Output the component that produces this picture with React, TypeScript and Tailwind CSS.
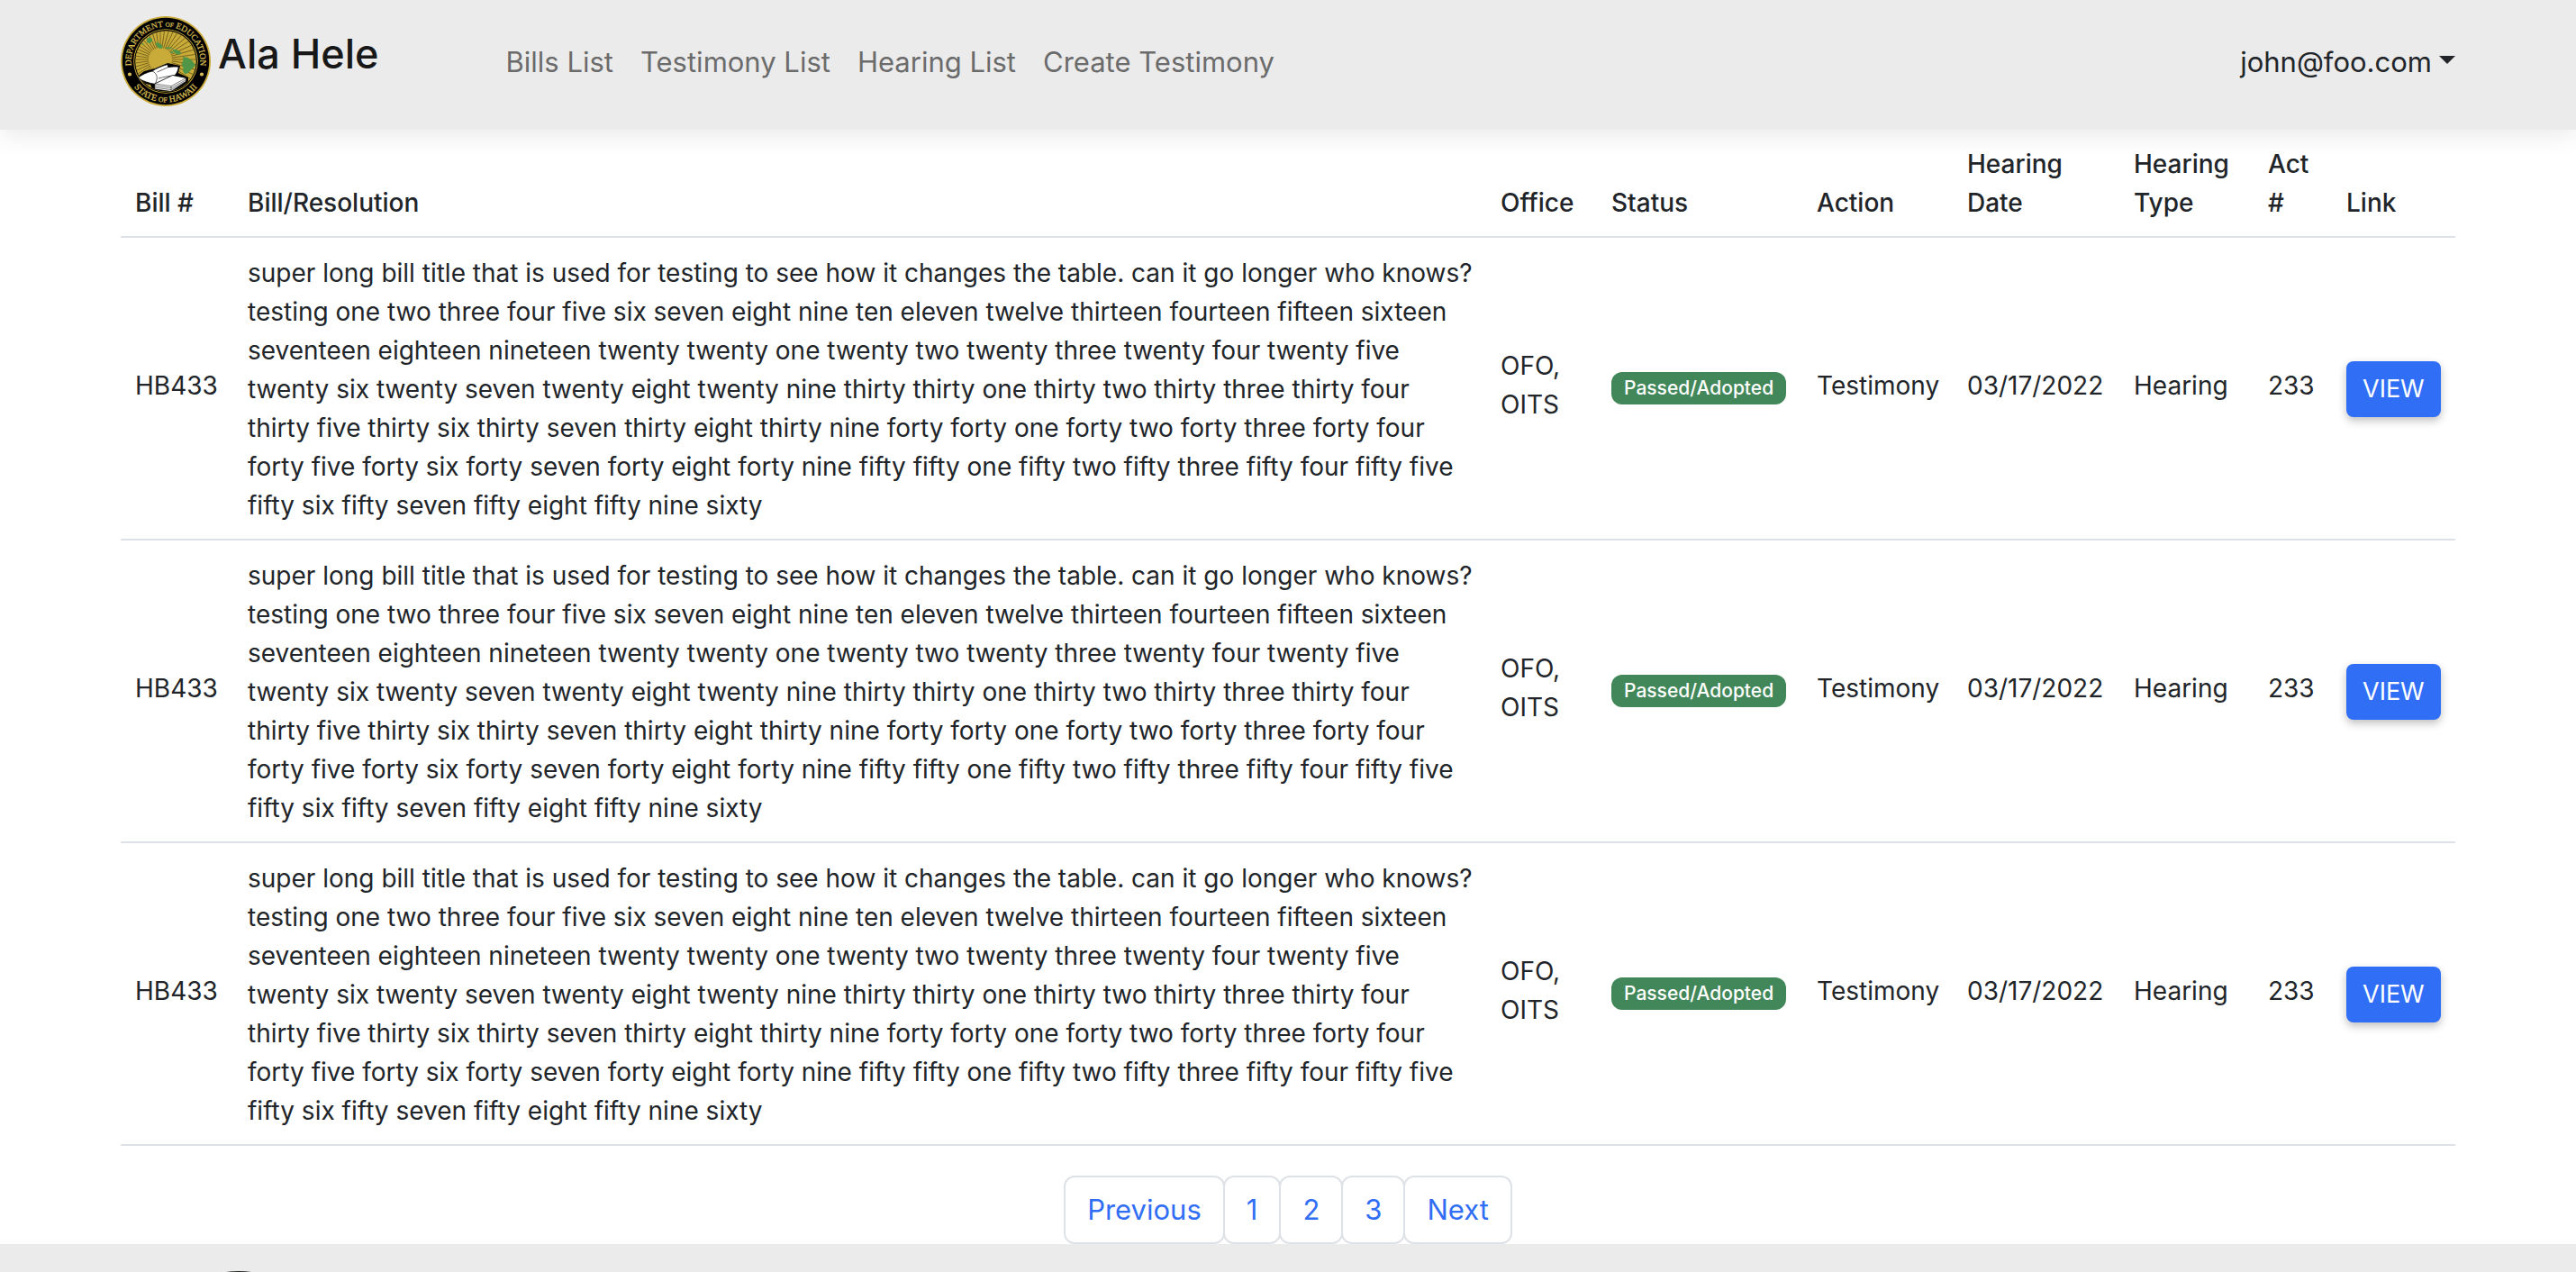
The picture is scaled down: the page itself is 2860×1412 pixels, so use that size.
import type { ReactNode } from "react";

const navLinks = ["Bills List", "Testimony List", "Hearing List", "Create Testimony"];

const billTitle =
  "super long bill title that is used for testing to see how it changes the table. can it go longer who knows? testing one two three four five six seven eight nine ten eleven twelve thirteen fourteen fifteen sixteen seventeen eighteen nineteen twenty twenty one twenty two twenty three twenty four twenty five twenty six twenty seven twenty eight twenty nine thirty thirty one thirty two thirty three thirty four thirty five thirty six thirty seven thirty eight thirty nine forty forty one forty two forty three forty four forty five forty six forty seven forty eight forty nine fifty fifty one fifty two fifty three fifty four fifty five fifty six fifty seven fifty eight fifty nine sixty";

const bills = [1, 2, 3].map((id) => ({
  id,
  number: "HB433",
  title: billTitle,
  office: "OFO, OITS",
  status: "Passed/Adopted",
  action: "Testimony",
  date: "03/17/2022",
  type: "Hearing",
  act: "233",
}));

const rays = Array.from({ length: 44 }, (_, i) => (i * 360) / 44);

function Seal() {
  return (
    <svg viewBox="0 0 100 100" className="size-[100px] shrink-0" role="img" aria-label="Department of Education seal">
      <defs>
        <path id="seal-top" d="M12.900 59.900A38.400 38.400 0 1 1 87.100 59.900" />
        <path id="seal-bottom" d="M4.500 50a45.500 45.500 0 0 0 91 0" />
        <clipPath id="seal-disc">
          <circle cx="50" cy="50" r="33.500" />
        </clipPath>
      </defs>
      <circle cx="50" cy="50" r="50" fill="#c9ab3a" />
      <circle cx="50" cy="50" r="48.200" fill="#000" />
      <circle cx="50" cy="50" r="35.800" fill="#c9ab3a" />
      <circle cx="50" cy="50" r="34.900" fill="#000" />
      <circle cx="50" cy="50" r="33.800" fill="#c9ab3a" />
      <g clipPath="url(#seal-disc)">
        {rays.map((a) => (
          <path key={a} d="M44 35L44 -22" stroke="#4a3d0c" strokeWidth="0.6" transform={`rotate(${a} 44 48)`} />
        ))}
        <circle cx="44" cy="48" r="10.700" fill="#c9ab3a" />
        <path d="M17 68l9-7 12-3 14-6 14 3 -2 8 11 5v6l-12 8-6 2-22-2-2-6-6-1z" fill="#000" />
      </g>
      <g fill="#4f9648">
        <path d="M28.700 26l2.500-2.500 3.300.8.8 3-2.600 2.700-3.500-.8zM23.500 30.500l1.300-1 .8 1.800-1.300 1zM38.500 30l3-1 4.800 3.500-.3 3.500-3.500-.4-3-3z" />
        <path d="M49.800 34.800l6.500-.6 1.500 1.300-7.500.8zM55 39l2.600-.2.600 2-2.400.2zM57.500 36.800l4 .2 5.300 2.400-.4 3-5-.2-2-2.200z" />
        <path d="M69 45l5.500 1 5 3.500 3.700 5-3.700 3.500-4.500 5-3.500 1.200-2.500-3 .5-4-2-4 2-4z" />
      </g>
      <g stroke="#000" strokeWidth="0.8" fill="#fff" strokeLinejoin="round">
        <path d="M19.300 68.500c4-3.500 9-6 15.700-7.500 4-3 10-5.500 17-7.500l.7 3.200c3.800-.8 8-1 11.600-.4-.5 4-2 7-4.300 9.500l-22 9.500c-6-.8-13-2.800-18.700-6.800z" />
        <path d="M35 61c5 2 7 7 3.500 13.500M40.500 62l12-5.300M42 69c6-1.500 12-3 18-3" fill="none" strokeWidth="0.6" />
        <path d="M37.700 75l20-9.500 15 3v4L56 83.500l-18.300-2.500z" />
        <path d="M37.700 75l18.300 2.600 16.700-9M37.700 77l18.300 2.600 16.700-9M37.700 79l18.300 2.600 16.700-9.600M56 77.600v5.900" fill="none" strokeWidth="0.5" />
      </g>
      <circle cx="10" cy="64.500" r="2.100" fill="#d8bf55" />
      <circle cx="90" cy="64.500" r="2.100" fill="#d8bf55" />
      <g fill="#d8bf55" stroke="#d8bf55" strokeWidth="0.25" fontFamily="'Liberation Serif', serif" textAnchor="middle">
        <text fontSize="9.500">
          <textPath href="#seal-top" startOffset="50%">DEPARTMENT <tspan fontSize="7">OF</tspan> EDUCATION</textPath>
        </text>
        <text fontSize="10">
          <textPath href="#seal-bottom" startOffset="50%">STATE <tspan fontSize="8">OF</tspan> HAWAII</textPath>
        </text>
      </g>
    </svg>
  );
}

function FooterSeal() {
  return (
    <svg viewBox="0 0 200 200" className="size-[200px]" aria-hidden="true">
      <circle cx="100" cy="100" r="99" fill="#fff" stroke="#1d211b" strokeWidth="2" />
    </svg>
  );
}

function Head({ children }: { children: ReactNode }) {
  return (
    <th scope="col" className="px-4 pt-[17px] pb-[15px] text-left align-bottom font-medium">
      {children}
    </th>
  );
}

function PageLink({ children }: { children: ReactNode }) {
  return (
    <li className="-ml-0.5 first:ml-0">
      <a
        href="#"
        className="block rounded-lg border-2 border-[#dee2e6] bg-white px-6 py-3 text-[31px] leading-[48px] text-[#306ef6] in-first:rounded-l-xl in-last:rounded-r-xl"
      >
        {children}
      </a>
    </li>
  );
}

export default function App() {
  return (
    <div className="flex h-screen flex-col overflow-hidden bg-white font-['Inter','Liberation_Sans',sans-serif] text-[#212529]">
      <header className="relative shrink-0 bg-[#ebebeb] shadow-[0_8px_24px_rgba(0,0,0,0.08)]">
        <nav className="mx-auto flex h-36 max-w-[2640px] items-start px-6">
          <a href="#" className="mt-[18px] flex items-start gap-2 text-[#181818]">
            <Seal />
            <span className="mt-3 text-[45px] leading-[60px] font-medium">Ala Hele</span>
          </a>
          <ul className="mt-[45px] ml-[126px] flex text-[31px] leading-[48px] text-[#6b6b6b]">
            {navLinks.map((label) => (
              <li key={label}>
                <a href="#" className="block px-[15px]">{label}</a>
              </li>
            ))}
          </ul>
          <button type="button" className="mt-[45px] ml-auto flex gap-2 text-[31px] leading-[48px]">
            john@foo.com
            <svg viewBox="0 0 18 9" className="mt-[17px] h-[9px] w-[18px]" aria-hidden="true">
              <path d="M0 0h18l-9 9z" fill="currentColor" />
            </svg>
          </button>
        </nav>
      </header>

      <main className="mx-auto w-full max-w-[2640px] shrink-0 px-6">
        <table className="w-full table-fixed border-collapse text-[28px] leading-[43px]">
          <colgroup>
            <col className="w-[125px]" />
            <col />
            <col className="w-[123px]" />
            <col className="w-[228px]" />
            <col className="w-[167px]" />
            <col className="w-[185px]" />
            <col className="w-[149px]" />
            <col className="w-[87px]" />
            <col className="w-[137px]" />
          </colgroup>
          <thead>
            <tr className="border-b-2 border-[#dee2e6]">
              <Head>Bill #</Head>
              <Head>Bill/Resolution</Head>
              <Head>Office</Head>
              <Head>Status</Head>
              <Head>Action</Head>
              <Head>Hearing Date</Head>
              <Head>Hearing Type</Head>
              <Head>Act #</Head>
              <Head>Link</Head>
            </tr>
          </thead>
          <tbody>
            {bills.map((bill) => (
              <tr key={bill.id} className="border-b-2 border-[#dee2e6]">
                <td className="pt-[18px] pb-6 pl-4">{bill.number}</td>
                <td className="pt-[18px] pr-3 pb-[15px] pl-4">{bill.title}</td>
                <td className="px-4 pt-[18px] pb-6">{bill.office}</td>
                <td className="p-4">
                  <span className="block w-fit rounded-xl bg-[#428759] px-3.5 text-[21px] leading-9 font-medium text-white">
                    {bill.status}
                  </span>
                </td>
                <td className="pt-[18px] pb-6 pl-4">{bill.action}</td>
                <td className="pt-[18px] pb-6 pl-4">{bill.date}</td>
                <td className="pt-[18px] pb-6 pl-4">{bill.type}</td>
                <td className="pt-[18px] pb-6 pl-4">{bill.act}</td>
                <td className="pt-[18px] pb-4 pl-4">
                  <button
                    type="button"
                    className="block rounded-lg bg-[#306ef6] px-[18px] text-[27px] leading-[62px] text-white shadow-[0_4px_10px_rgba(0,0,0,0.25)]"
                  >
                    VIEW
                  </button>
                </td>
              </tr>
            ))}
          </tbody>
        </table>
        <ul className="mt-[33px] flex justify-center">
          <PageLink>Previous</PageLink>
          <PageLink>1</PageLink>
          <PageLink>2</PageLink>
          <PageLink>3</PageLink>
          <PageLink>Next</PageLink>
        </ul>
      </main>

      <footer className="grow bg-[#ebebeb]">
        <div className="mx-auto max-w-[2640px] px-[55px] pt-[30px]">
          <FooterSeal />
        </div>
      </footer>
    </div>
  );
}
